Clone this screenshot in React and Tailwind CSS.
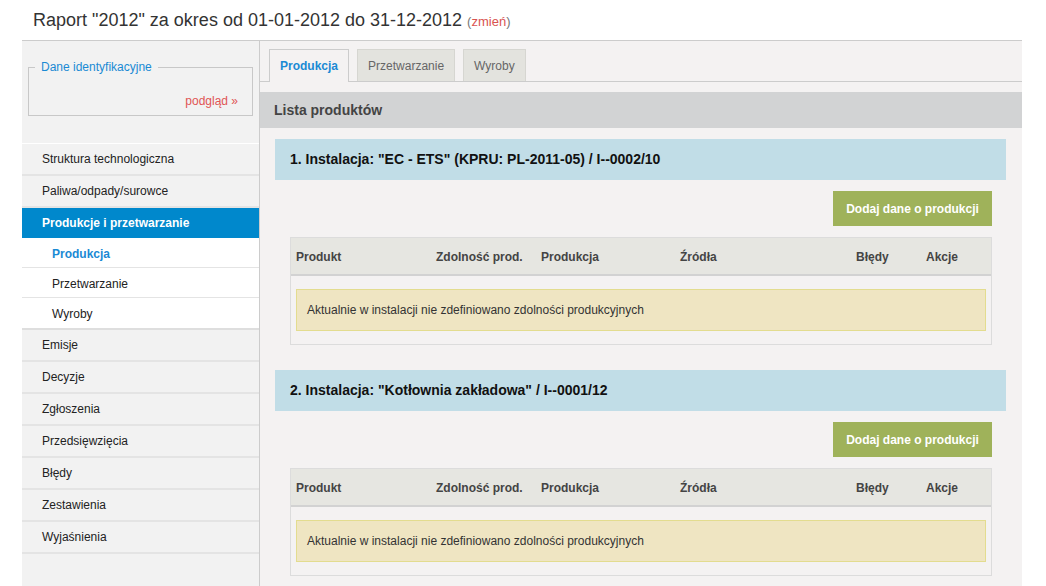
import React from 'react';

const menu = [
  { label: 'Struktura technologiczna' },
  { label: 'Paliwa/odpady/surowce' },
  { label: 'Produkcje i przetwarzanie', active: true, children: ['Produkcja', 'Przetwarzanie', 'Wyroby'] },
  { label: 'Emisje' },
  { label: 'Decyzje' },
  { label: 'Zgłoszenia' },
  { label: 'Przedsięwzięcia' },
  { label: 'Błędy' },
  { label: 'Zestawienia' },
  { label: 'Wyjaśnienia' },
];

const installations = [
  '1. Instalacja: "EC - ETS" (KPRU: PL-2011-05) / I--0002/10',
  '2. Instalacja: "Kotłownia zakładowa" / I--0001/12',
];

const columns = ['Produkt', 'Zdolność prod.', 'Produkcja', 'Źródła', 'Błędy', 'Akcje'];

const Sidebar = () => (
  <div className="w-[238px] shrink-0 bg-[#f2f2f2] border-r border-[#cccccc]">
    <fieldset className="mx-[6px] mt-[19px] border border-[#c8c8c8] pr-[14px] pb-[7px]">
      <legend className="ml-[6px] px-[6px] text-[12px] leading-[14px] text-[#1a8ad4]">Dane identyfikacyjne</legend>
      <div className="pt-[20px] text-right text-[12px] leading-[14px] text-[#e05555]">podgląd »</div>
    </fieldset>
    <ul className="mt-[27px] border-t border-white">
      {menu.map((item) => (
        <li key={item.label}>
          {item.active ? (
            <>
              <div className="h-[30px] flex items-center pl-[20px] bg-[#0088cc] text-white font-bold text-[12px]">
                {item.label}
              </div>
              {item.children.map((c, i) => (
                <div
                  key={c}
                  className={
                    i === item.children.length - 1
                      ? 'h-[32px] flex items-center pl-[30px] pt-[1px] bg-white text-[12px] text-[#222] border-b-2 border-[#dedede]'
                      : 'h-[30px] flex items-center pl-[30px] pt-[2px] bg-white text-[12px] text-[#222] border-b border-[#e4e4e4]'
                  }
                >
                  {i === 0 ? <span className="font-bold text-[#1a8ad4]">{c}</span> : c}
                </div>
              ))}
            </>
          ) : (
            <div className="h-[32px] flex items-center pl-[20px] text-[12px] text-[#222] border-b-2 border-[#e4e4e4]">
              {item.label}
            </div>
          )}
        </li>
      ))}
    </ul>
  </div>
);

const Installation = ({ title }) => (
  <div className="mx-[15px] mr-[16px] mb-[25px]">
    <div className="h-[41px] flex items-center pl-[15px] bg-[#c1dde7] text-[14px] font-bold text-[#111]">{title}</div>
    <div className="flex justify-end pr-[14px] mt-[11px]">
      <button className="w-[159px] h-[35px] bg-[#9fb25a] text-white text-[12px] font-bold">Dodaj dane o produkcji</button>
    </div>
    <div className="ml-[15px] mr-[14px] mt-[11px] border border-[#dcdcdc]">
      <div className="h-[38px] grid grid-cols-[140px_105px_139px_176px_70px_1fr] items-center pl-[5px] pt-[1px] bg-[#e6e6e1] border-b-2 border-[#d2d2d2] text-[12px] font-bold text-[#444]">
        {columns.map((c) => (
          <div key={c}>{c}</div>
        ))}
      </div>
      <div className="px-[5px] pt-[13px] pb-[13px]">
        <div className="h-[42px] flex items-center pl-[10px] bg-[#efe5c2] border border-[#e3dc8f] text-[12px] text-[#333]">
          Aktualnie w instalacji nie zdefiniowano zdolności produkcyjnych
        </div>
      </div>
    </div>
  </div>
);

export default function App() {
  return (
    <div className="w-[1046px] h-[586px] overflow-hidden bg-white font-['Liberation_Sans',Arial,sans-serif]">
      <div className="h-[40px] pl-[33px] pt-[9px] leading-[22px] text-[18px] text-[#333]">
        Raport "2012" za okres od 01-01-2012 do 31-12-2012{' '}
        <span className="text-[13px] text-[#777]">
          (<span className="text-[#d9534f]">zmień</span>)
        </span>
      </div>
      <div className="ml-[22px] w-[1000px] h-[546px] flex border-t border-[#cccccc]">
        <Sidebar />
        <div className="flex-1 bg-[#f4f2f2]">
          <div className="pt-[8px] pl-[9px] flex gap-[8px] border-b border-[#cccccc]">
            {['Produkcja', 'Przetwarzanie', 'Wyroby'].map((t, i) => (
              <div
                key={t}
                className={
                  i === 0
                    ? 'h-[33px] -mb-px px-[10px] flex items-center bg-[#f4f2f2] border border-b-0 border-[#cccccc] text-[12px] font-bold text-[#1a8ad4]'
                    : 'h-[32px] px-[10px] flex items-center bg-[#e3e3de] border border-b-0 border-[#d6d6d1] text-[12px] text-[#666]'
                }
              >
                {t}
              </div>
            ))}
          </div>
          <div className="mt-[10px] h-[36px] flex items-center pl-[14px] bg-[#d2d3d4] text-[14px] font-bold text-[#444]">
            Lista produktów
          </div>
          <div className="pt-[11px]">
            {installations.map((t) => (
              <Installation key={t} title={t} />
            ))}
          </div>
        </div>
      </div>
    </div>
  );
}
